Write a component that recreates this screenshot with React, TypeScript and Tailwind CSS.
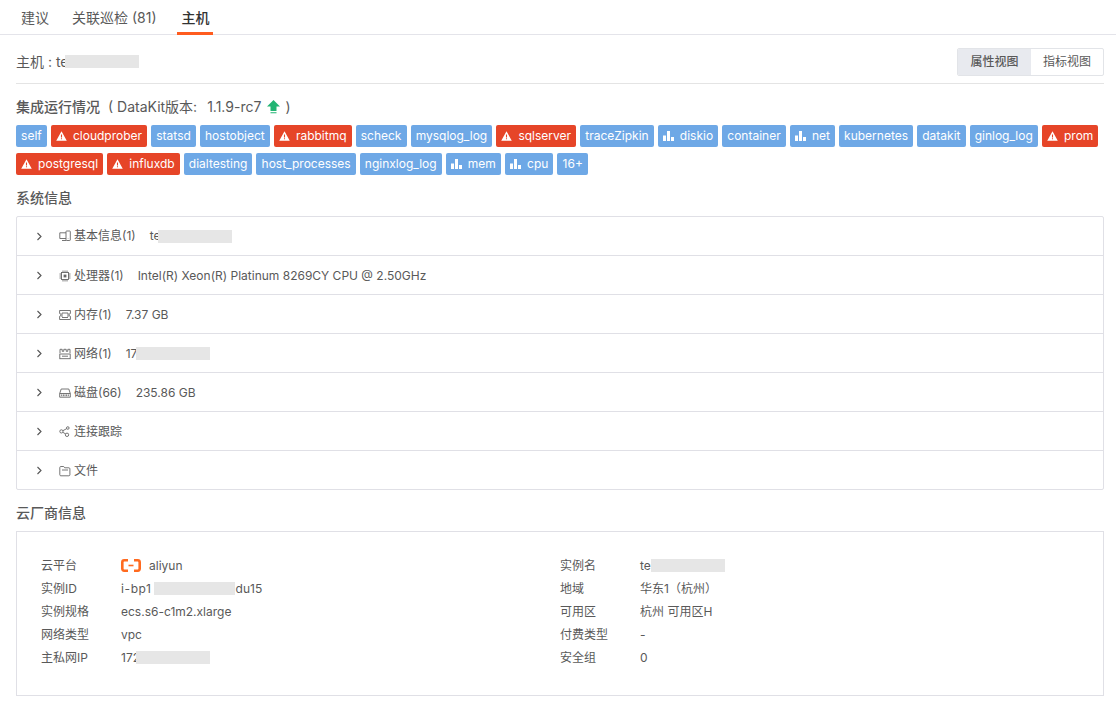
const font = { fontFamily: '"Inter", "Noto Sans CJK SC", sans-serif' }

type Tag = { name: string; kind?: 'warn' | 'chart' }

const tags: Tag[] = [
  { name: 'self' },
  { name: 'cloudprober', kind: 'warn' },
  { name: 'statsd' },
  { name: 'hostobject' },
  { name: 'rabbitmq', kind: 'warn' },
  { name: 'scheck' },
  { name: 'mysqlog_log' },
  { name: 'sqlserver', kind: 'warn' },
  { name: 'traceZipkin' },
  { name: 'diskio', kind: 'chart' },
  { name: 'container' },
  { name: 'net', kind: 'chart' },
  { name: 'kubernetes' },
  { name: 'datakit' },
  { name: 'ginlog_log' },
  { name: 'prom', kind: 'warn' },
  { name: 'postgresql', kind: 'warn' },
  { name: 'influxdb', kind: 'warn' },
  { name: 'dialtesting' },
  { name: 'host_processes' },
  { name: 'nginxlog_log' },
  { name: 'mem', kind: 'chart' },
  { name: 'cpu', kind: 'chart' },
  { name: '16+' },
]

const WarnIcon = () => (
  <svg width="11" height="10" viewBox="0 0 12 11" className="shrink-0">
    <path fillRule="evenodd" fill="#fff" d="M6 0.3 11.8 10.6H0.2ZM5.4 3.8V7.2H6.6V3.8ZM5.4 8V9.2H6.6V8Z" />
  </svg>
)

const ChartIcon = () => (
  <svg width="11" height="10" viewBox="0 0 11 10" className="shrink-0">
    <path fill="#fff" d="M0 4.5h3V10H0ZM4 0h3v10H4ZM8 6h3v4H8Z" />
  </svg>
)

const Redacted = ({ w, className = '' }: { w: number; className?: string }) => (
  <span className={`inline-block h-[13px] bg-[#e6e6e6] align-middle ${className}`} style={{ width: w }} />
)

const RowIcon = ({ name }: { name: string }) => {
  const common = { width: 12, height: 12, viewBox: '0 0 12 12', fill: 'none', stroke: '#666', strokeWidth: 0.9 }
  if (name === 'basic')
    return (
      <svg {...common}>
        <rect x="7" y="1" width="4.3" height="9.5" rx="0.6" />
        <path d="M7 2.8H.8v5.7H7M3 10.5h4M9.1 8.4v.4" />
      </svg>
    )
  if (name === 'cpu')
    return (
      <svg {...common}>
        <rect x="2.5" y="2.5" width="7" height="7" />
        <rect x="4.6" y="4.6" width="2.8" height="2.8" fill="#666" stroke="none" />
        <path d="M4 .5v2M6 .5v2M8 .5v2M4 9.5v2M6 9.5v2M8 9.5v2M.5 4h2M.5 6h2M.5 8h2M9.5 4h2M9.5 6h2M9.5 8h2" />
      </svg>
    )
  if (name === 'mem')
    return (
      <svg {...common}>
        <path d="M.6 1.5h10.8v3a1.4 1.4 0 0 0 0 2.800v3.200H.6V7.300a1.4 1.4 0 0 0 0-2.800Z" />
        <path d="M3 4h6v4M3 4v4M3 8.500h6" />
      </svg>
    )
  if (name === 'net')
    return (
      <svg {...common}>
        <path d="M1 5V1.300h2.200v2h1.600v-2h2.400v2h1.600v-2H11V5" />
        <rect x=".8" y="6" width="10.4" height="4.7" />
        <path d="M3 8.200h6" />
      </svg>
    )
  if (name === 'disk')
    return (
      <svg {...common}>
        <path d="M.7 6.500 2.200 2h7.600l1.500 4.500v3.700H.7ZM.7 6.500h10.600M2.700 7.400v1.800M4.400 7.400v1.800M6 7.400v1.800M7.600 7.400v1.800M9.300 7.400v1.800" />
      </svg>
    )
  if (name === 'trace')
    return (
      <svg {...common}>
        <circle cx="2.4" cy="5.4" r="1.6" />
        <circle cx="8.8" cy="2" r="1.3" />
        <circle cx="8" cy="8.8" r="1.7" />
        <path d="M3.900 4.700 7.600 2.700M3.800 6.300 6.600 7.900" />
      </svg>
    )
  return (
    <svg {...common}>
      <path d="M1.800 1.500h2.900l1 1.300h4.200c.6 0 1 .4 1 1v6c0 .6-.4 1-1 1H1.800c-.6 0-1-.4-1-1v-7.300c0-.6.4-1 1-1Z" />
      <path d="M3 5h6" />
    </svg>
  )
}

const rows: { icon: string; label: string; value?: string; redact?: string; gap?: string }[] = [
  { icon: 'basic', label: '基本信息(1)', redact: 'te', gap: '-ml-[2px]' },
  { icon: 'cpu', label: '处理器(1)', value: 'Intel(R) Xeon(R) Platinum 8269CY CPU @ 2.50GHz' },
  { icon: 'mem', label: '内存(1)', value: '7.37 GB' },
  { icon: 'net', label: '网络(1)', redact: '17', gap: '-ml-[1px]' },
  { icon: 'disk', label: '磁盘(66)', value: '235.86 GB' },
  { icon: 'trace', label: '连接跟踪' },
  { icon: 'file', label: '文件' },
]

const Info = ({ label, children }: { label: string; children: React.ReactNode }) => (
  <div className="flex h-[23px] items-center">
    <span className="w-[80px] shrink-0">{label}</span>
    <span className="flex items-center">{children}</span>
  </div>
)

export default function App() {
  return (
    <div style={font} className="h-[710px] w-[1116px] overflow-hidden bg-white text-[12px] text-[#595959]">
      <div className="flex h-[35px] gap-[13px] border-b border-[#e4e4ea] pl-[16px]">
        <div className="flex h-[35px] items-center px-[5px] text-[14px]">建议</div>
        <div className="flex h-[35px] items-center px-[5px] text-[14px]">关联巡检 (81)</div>
        <div className="ml-[2px] flex h-[35px] items-center border-b-[3px] border-[#ff5c1f] pl-[5px] pr-[3px] pt-[3px] text-[14px] font-medium text-[#333]">主机</div>
      </div>

      <div className="pl-[16px] pr-[12px]">
        <div className="flex h-[49px] items-center justify-between border-b border-[#e4e4e4] pt-[5px]">
          <div className="flex items-center text-[14px]">
            主机 : te<Redacted w={74} className="-ml-[4px]" />
          </div>
          <div className="flex h-[28px] overflow-hidden rounded-[2px] border border-[#e2e4e8]">
            <div className="flex w-[73px] items-center justify-center bg-[#e8eaef] font-medium">属性视图</div>
            <div className="flex w-[72px] items-center justify-center">指标视图</div>
          </div>
        </div>

        <div className="mt-[13px] flex h-[19px] items-center text-[14px]">
          <span className="font-medium">集成运行情况</span>
          <span className="ml-[8px]">( DataKit版本:</span>
          <span className="ml-[10px]">1.1.9-rc7</span>
          <svg width="13" height="14" viewBox="0 0 13 14" className="ml-[6px]">
            <path fill="#22b573" d="M6.500 0 13 6.500H9.500V11h-6V6.500H0ZM3.500 12.200h6v1h-6Z" />
          </svg>
          <span className="ml-[5px]">)</span>
        </div>

        <div className="mt-[9px] flex flex-wrap gap-x-[4px] gap-y-[6px]">
          {tags.map((t) => (
            <div
              key={t.name}
              className={`flex h-[22px] items-center gap-[6px] rounded-[2px] px-[5.1px] text-white ${t.kind === 'warn' ? 'bg-[#e64528]' : 'bg-[#6ea8e6]'}`}
            >
              {t.kind === 'warn' && <WarnIcon />}
              {t.kind === 'chart' && <ChartIcon />}
              {t.name}
            </div>
          ))}
        </div>

        <div className="mt-[13px] flex h-[19px] items-center text-[14px] font-medium">系统信息</div>

        <div className="mt-[9px] rounded-[2px] border border-[#e0e0e6]">
          {rows.map((r, i) => (
            <div key={r.label} className={`flex items-center pl-[19px] ${i > 0 ? 'h-[39px] border-t border-[#e0e0e6] pt-[1px]' : 'h-[38px]'}`}>
              <svg width="7" height="9" viewBox="0 0 7 9" className="mr-[16px]" fill="none" stroke="#555" strokeWidth="1.1">
                <path d="M1.500 1 5 4.500 1.500 8" />
              </svg>
              <RowIcon name={r.icon} />
              <span className="ml-[3px]">{r.label}</span>
              {r.value && <span className="ml-[14px]">{r.value}</span>}
              {r.redact && (
                <span className="ml-[14px] flex items-center">
                  {r.redact}
                  <Redacted w={74} className={r.gap} />
                </span>
              )}
            </div>
          ))}
        </div>

        <div className="mt-[13px] flex h-[19px] items-center text-[14px] font-medium">云厂商信息</div>

        <div className="mt-[9px] h-[165px] border border-[#e0e0e6] px-[24px] pt-[22px]">
          <div className="grid grid-cols-2">
            <div>
              <Info label="云平台">
                <svg width="20" height="13" viewBox="0 0 20 13" fill="none" stroke="#ff6a1f" className="mr-[8px]">
                  <path strokeWidth="2.6" d="M7 1.300H3.200A2 2 0 0 0 1.300 3.200v6.600a2 2 0 0 0 1.900 1.900H7M13 1.300h3.800a2 2 0 0 1 1.900 1.900v6.600a2 2 0 0 1-1.900 1.900H13" />
                  <path strokeWidth="1.6" d="M7.500 6.500h5" />
                </svg>
                aliyun
              </Info>
              <Info label="实例ID">
                <span className="tracking-[0.6px]">i-bp1</span>
                <Redacted w={81} className="ml-[2px]" />
                <span className="ml-[1px]">du15</span>
              </Info>
              <Info label="实例规格">ecs.s6-c1m2.xlarge</Info>
              <Info label="网络类型">vpc</Info>
              <Info label="主私网IP">
                172<Redacted w={74} className="-ml-[4px]" />
              </Info>
            </div>
            <div>
              <Info label="实例名">
                te<Redacted w={74} />
              </Info>
              <Info label="地域">华东1（杭州）</Info>
              <Info label="可用区">杭州 可用区H</Info>
              <Info label="付费类型">-</Info>
              <Info label="安全组">0</Info>
            </div>
          </div>
        </div>
      </div>
    </div>
  )
}
